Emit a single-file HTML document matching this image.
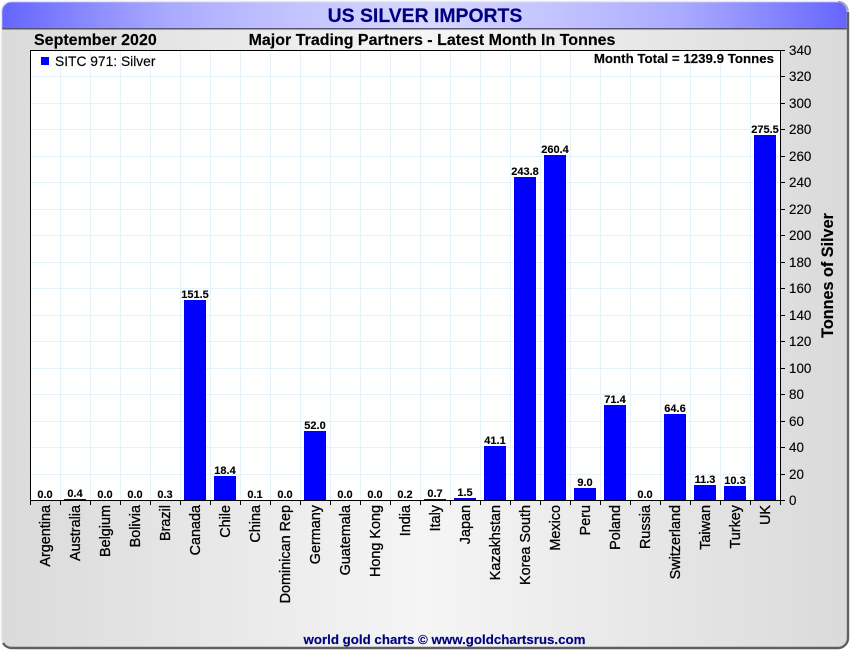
<!DOCTYPE html>
<html><head><meta charset="utf-8"><title>US Silver Imports</title>
<style>
html,body{margin:0;padding:0;background:#fff;width:850px;height:650px;overflow:hidden}
svg{display:block}
text{font-family:"Liberation Sans",Arial,sans-serif;fill:#000}
.v{font-size:11px;font-weight:bold;text-anchor:middle;stroke:#000;stroke-width:.12px}
.y{font-size:13.4px;stroke:#000;stroke-width:.12px}
.x{font-size:14.4px;text-anchor:end;stroke:#000;stroke-width:.3px}
.b{stroke:#000;stroke-width:.15px}
.n{stroke:#000080;stroke-width:.15px}
</style></head><body>
<svg width="850" height="650" viewBox="0 0 850 650" xmlns="http://www.w3.org/2000/svg">
<defs>
<linearGradient id="bg" x1="0" x2="1" y1="0" y2="0"><stop offset="0" stop-color="#dadada"/><stop offset=".5" stop-color="#f5f5f5"/><stop offset="1" stop-color="#dadada"/></linearGradient>
<linearGradient id="hd" x1="0" x2="1" y1="0" y2="0"><stop offset="0" stop-color="#6464ff"/><stop offset=".12" stop-color="#9090ff"/><stop offset=".2" stop-color="#aaaaff"/><stop offset=".3" stop-color="#bcbcff"/><stop offset=".5" stop-color="#d8d8ff"/><stop offset=".7" stop-color="#bcbcff"/><stop offset=".8" stop-color="#aaaaff"/><stop offset=".88" stop-color="#9090ff"/><stop offset="1" stop-color="#6464ff"/></linearGradient>
<clipPath id="fr"><rect x="1" y="1" width="847" height="647" rx="10"/></clipPath>
</defs>
<rect x="1" y="1" width="847" height="647" rx="10" fill="url(#bg)"/>
<g clip-path="url(#fr)"><rect x="0" y="0" width="850" height="28" fill="url(#hd)"/><rect x="0" y="28" width="850" height="1.5" fill="#555570"/></g>
<rect x="1.5" y="1.5" width="846" height="646" rx="10" fill="none" stroke="#e8e8f0" stroke-width="1.5"/>
<path d="M848 12V638a10 10 0 0 1-10 10H12a10 10 0 0 1-9-5" fill="none" stroke="#606060" stroke-width="2.4"/>
<path d="M838 1.5a10 10 0 0 1 10 10" fill="none" stroke="#a0a0a8" stroke-width="1.5"/>
<text class="n" x="425" y="22" font-size="19.4" font-weight="bold" text-anchor="middle" style="fill:#000080">US SILVER IMPORTS</text>
<text class="b" x="34" y="45" font-size="16" font-weight="bold">September 2020</text>
<text class="b" x="432" y="45" font-size="16" font-weight="bold" text-anchor="middle">Major Trading Partners - Latest Month In Tonnes</text>
<rect x="30" y="50" width="751" height="451" fill="#fff"/>
<path fill="none" stroke="#e6f2fa" stroke-width="1" d="M60.5 51V500M90.5 51V500M120.5 51V500M150.5 51V500M180.5 51V500M210.5 51V500M240.5 51V500M270.5 51V500M300.5 51V500M330.5 51V500M360.5 51V500M390.5 51V500M420.5 51V500M450.5 51V500M480.5 51V500M510.5 51V500M540.5 51V500M570.5 51V500M600.5 51V500M630.5 51V500M660.5 51V500M690.5 51V500M720.5 51V500M750.5 51V500M31 76.5H780M31 103.5H780M31 129.5H780M31 156.5H780M31 182.5H780M31 209.5H780M31 235.5H780M31 262.5H780M31 288.5H780M31 315.5H780M31 341.5H780M31 368.5H780M31 394.5H780M31 421.5H780M31 447.5H780M31 474.5H780"/>
<g fill="#0000ff">
<rect x="64" y="499" width="22" height="1"/>
<rect x="184" y="300" width="22" height="200"/>
<rect x="214" y="476" width="22" height="24"/>
<rect x="304" y="431" width="22" height="69"/>
<rect x="424" y="499" width="22" height="1"/>
<rect x="454" y="498" width="22" height="2"/>
<rect x="484" y="446" width="22" height="54"/>
<rect x="514" y="177" width="22" height="323"/>
<rect x="544" y="155" width="22" height="345"/>
<rect x="574" y="488" width="22" height="12"/>
<rect x="604" y="405" width="22" height="95"/>
<rect x="664" y="414" width="22" height="86"/>
<rect x="694" y="485" width="22" height="15"/>
<rect x="724" y="486" width="22" height="14"/>
<rect x="754" y="135" width="22" height="365"/>
</g>
<path fill="none" stroke="#000" stroke-width="1" d="M30.5 50.5H780.5V500.5H30.5ZM30.5 500V505M60.5 500V505M90.5 500V505M120.5 500V505M150.5 500V505M180.5 500V505M210.5 500V505M240.5 500V505M270.5 500V505M300.5 500V505M330.5 500V505M360.5 500V505M390.5 500V505M420.5 500V505M450.5 500V505M480.5 500V505M510.5 500V505M540.5 500V505M570.5 500V505M600.5 500V505M630.5 500V505M660.5 500V505M690.5 500V505M720.5 500V505M750.5 500V505M780.5 500V505M780 50.5H785M780 76.5H785M780 103.5H785M780 129.5H785M780 156.5H785M780 182.5H785M780 209.5H785M780 235.5H785M780 262.5H785M780 288.5H785M780 315.5H785M780 341.5H785M780 368.5H785M780 394.5H785M780 421.5H785M780 447.5H785M780 474.5H785M780 500.5H785"/>
<rect x="41" y="57" width="8" height="8" fill="#0000ff"/>
<text class="b" x="55" y="66" font-size="13.8">SITC 971: Silver</text>
<text class="b" x="774" y="63" font-size="13.3" font-weight="bold" text-anchor="end">Month Total = 1239.9 Tonnes</text>
<g class="yl">
<text class="y" x="789" y="55">340</text>
<text class="y" x="789" y="81">320</text>
<text class="y" x="789" y="108">300</text>
<text class="y" x="789" y="134">280</text>
<text class="y" x="789" y="161">260</text>
<text class="y" x="789" y="187">240</text>
<text class="y" x="789" y="214">220</text>
<text class="y" x="789" y="240">200</text>
<text class="y" x="789" y="267">180</text>
<text class="y" x="789" y="293">160</text>
<text class="y" x="789" y="320">140</text>
<text class="y" x="789" y="346">120</text>
<text class="y" x="789" y="373">100</text>
<text class="y" x="789" y="399">80</text>
<text class="y" x="789" y="426">60</text>
<text class="y" x="789" y="452">40</text>
<text class="y" x="789" y="479">20</text>
<text class="y" x="789" y="505">0</text>
</g>
<text class="b" transform="translate(833 275.5) rotate(-90)" font-size="16.2" font-weight="bold" text-anchor="middle">Tonnes of Silver</text>
<text class="v" x="45" y="498">0.0</text>
<text class="v" x="75" y="497">0.4</text>
<text class="v" x="105" y="498">0.0</text>
<text class="v" x="135" y="498">0.0</text>
<text class="v" x="165" y="498">0.3</text>
<text class="v" x="195" y="298">151.5</text>
<text class="v" x="225" y="474">18.4</text>
<text class="v" x="255" y="498">0.1</text>
<text class="v" x="285" y="498">0.0</text>
<text class="v" x="315" y="429">52.0</text>
<text class="v" x="345" y="498">0.0</text>
<text class="v" x="375" y="498">0.0</text>
<text class="v" x="405" y="498">0.2</text>
<text class="v" x="435" y="497">0.7</text>
<text class="v" x="465" y="496">1.5</text>
<text class="v" x="495" y="444">41.1</text>
<text class="v" x="525" y="175">243.8</text>
<text class="v" x="555" y="153">260.4</text>
<text class="v" x="585" y="486">9.0</text>
<text class="v" x="615" y="403">71.4</text>
<text class="v" x="645" y="498">0.0</text>
<text class="v" x="675" y="412">64.6</text>
<text class="v" x="705" y="483">11.3</text>
<text class="v" x="735" y="484">10.3</text>
<text class="v" x="765" y="133">275.5</text>
<text class="x" transform="translate(50 505) rotate(-90)">Argentina</text>
<text class="x" transform="translate(80 505) rotate(-90)">Australia</text>
<text class="x" transform="translate(110 505) rotate(-90)">Belgium</text>
<text class="x" transform="translate(140 505) rotate(-90)">Bolivia</text>
<text class="x" transform="translate(170 505) rotate(-90)">Brazil</text>
<text class="x" transform="translate(200 505) rotate(-90)">Canada</text>
<text class="x" transform="translate(230 505) rotate(-90)">Chile</text>
<text class="x" transform="translate(260 505) rotate(-90)">China</text>
<text class="x" transform="translate(290 505) rotate(-90)">Dominican Rep</text>
<text class="x" transform="translate(320 505) rotate(-90)">Germany</text>
<text class="x" transform="translate(350 505) rotate(-90)">Guatemala</text>
<text class="x" transform="translate(380 505) rotate(-90)">Hong Kong</text>
<text class="x" transform="translate(410 505) rotate(-90)">India</text>
<text class="x" transform="translate(440 505) rotate(-90)">Italy</text>
<text class="x" transform="translate(470 505) rotate(-90)">Japan</text>
<text class="x" transform="translate(500 505) rotate(-90)">Kazakhstan</text>
<text class="x" transform="translate(530 505) rotate(-90)">Korea South</text>
<text class="x" transform="translate(560 505) rotate(-90)">Mexico</text>
<text class="x" transform="translate(590 505) rotate(-90)">Peru</text>
<text class="x" transform="translate(620 505) rotate(-90)">Poland</text>
<text class="x" transform="translate(650 505) rotate(-90)">Russia</text>
<text class="x" transform="translate(680 505) rotate(-90)">Switzerland</text>
<text class="x" transform="translate(710 505) rotate(-90)">Taiwan</text>
<text class="x" transform="translate(740 505) rotate(-90)">Turkey</text>
<text class="x" transform="translate(770 505) rotate(-90)">UK</text>
<text class="n" x="444.5" y="644" font-size="13.3" font-weight="bold" text-anchor="middle" style="fill:#000080">world gold charts © www.goldchartsrus.com</text>
</svg>
</body></html>
